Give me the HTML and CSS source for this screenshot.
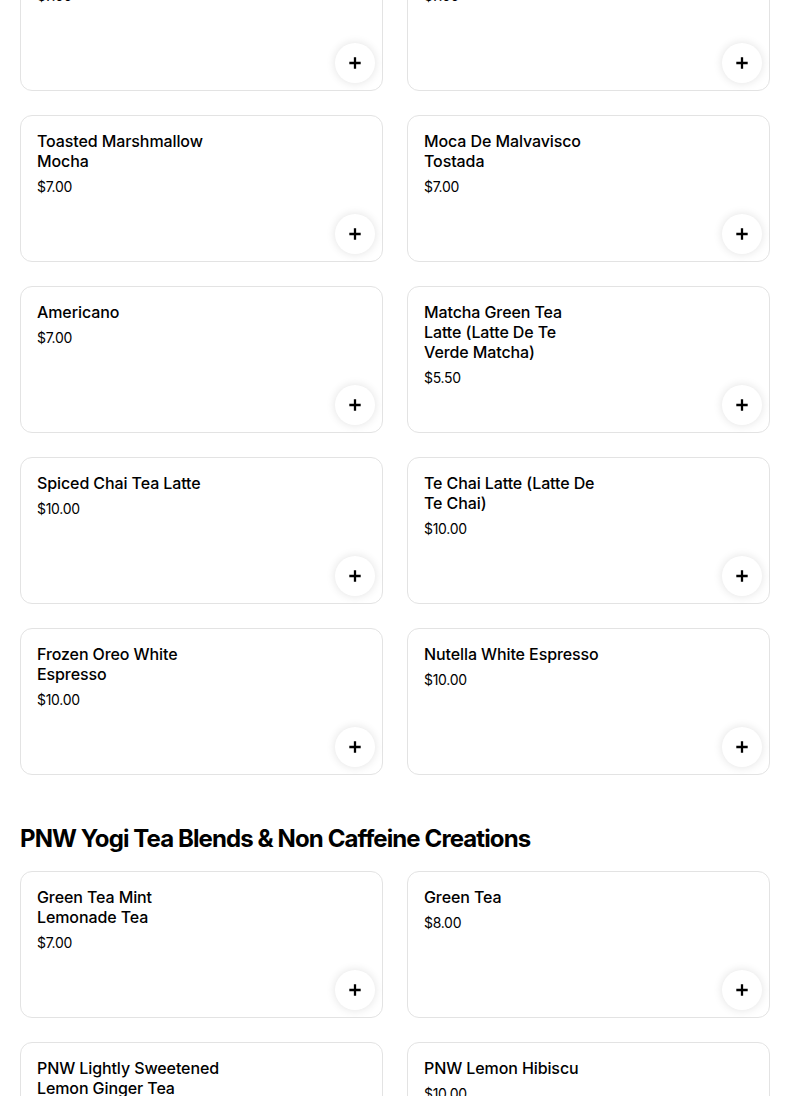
FILE: index.html
```html
<!DOCTYPE html>
<html lang="en">
<head>
<meta charset="utf-8">
<title>Menu</title>
<link rel="stylesheet" href="styles.css">
</head>
<body>
<main class="menu">
  <section class="section section-first">
    <div class="grid">
      <div class="card"><div class="card-title">Caramel Macchiato</div><div class="card-price">$7.00</div><button class="add" aria-label="Add"><svg viewBox="0 0 16 16" width="14" height="14"><path d="M8 1.5v13M1.5 8h13" stroke="#000" stroke-width="2.6" fill="none"/></svg></button></div>
      <div class="card"><div class="card-title">Macchiato De Caramelo</div><div class="card-price">$7.00</div><button class="add" aria-label="Add"><svg viewBox="0 0 16 16" width="14" height="14"><path d="M8 1.5v13M1.5 8h13" stroke="#000" stroke-width="2.6" fill="none"/></svg></button></div>
      <div class="card"><div class="card-title">Toasted Marshmallow Mocha</div><div class="card-price">$7.00</div><button class="add" aria-label="Add"><svg viewBox="0 0 16 16" width="14" height="14"><path d="M8 1.5v13M1.5 8h13" stroke="#000" stroke-width="2.6" fill="none"/></svg></button></div>
      <div class="card"><div class="card-title">Moca De Malvavisco Tostada</div><div class="card-price">$7.00</div><button class="add" aria-label="Add"><svg viewBox="0 0 16 16" width="14" height="14"><path d="M8 1.5v13M1.5 8h13" stroke="#000" stroke-width="2.6" fill="none"/></svg></button></div>
      <div class="card"><div class="card-title">Americano</div><div class="card-price">$7.00</div><button class="add" aria-label="Add"><svg viewBox="0 0 16 16" width="14" height="14"><path d="M8 1.5v13M1.5 8h13" stroke="#000" stroke-width="2.6" fill="none"/></svg></button></div>
      <div class="card"><div class="card-title">Matcha Green Tea<br>Latte (Latte De Te<br>Verde Matcha)</div><div class="card-price">$5.50</div><button class="add" aria-label="Add"><svg viewBox="0 0 16 16" width="14" height="14"><path d="M8 1.5v13M1.5 8h13" stroke="#000" stroke-width="2.6" fill="none"/></svg></button></div>
      <div class="card"><div class="card-title">Spiced Chai Tea Latte</div><div class="card-price">$10.00</div><button class="add" aria-label="Add"><svg viewBox="0 0 16 16" width="14" height="14"><path d="M8 1.5v13M1.5 8h13" stroke="#000" stroke-width="2.6" fill="none"/></svg></button></div>
      <div class="card"><div class="card-title">Te Chai Latte (Latte De Te Chai)</div><div class="card-price">$10.00</div><button class="add" aria-label="Add"><svg viewBox="0 0 16 16" width="14" height="14"><path d="M8 1.5v13M1.5 8h13" stroke="#000" stroke-width="2.6" fill="none"/></svg></button></div>
      <div class="card"><div class="card-title">Frozen Oreo White Espresso</div><div class="card-price">$10.00</div><button class="add" aria-label="Add"><svg viewBox="0 0 16 16" width="14" height="14"><path d="M8 1.5v13M1.5 8h13" stroke="#000" stroke-width="2.6" fill="none"/></svg></button></div>
      <div class="card"><div class="card-title">Nutella White Espresso</div><div class="card-price">$10.00</div><button class="add" aria-label="Add"><svg viewBox="0 0 16 16" width="14" height="14"><path d="M8 1.5v13M1.5 8h13" stroke="#000" stroke-width="2.6" fill="none"/></svg></button></div>
    </div>
  </section>
  <section class="section">
    <h2 class="section-title">PNW Yogi Tea Blends &amp; Non Caffeine Creations</h2>
    <div class="grid">
      <div class="card"><div class="card-title">Green Tea Mint Lemonade Tea</div><div class="card-price">$7.00</div><button class="add" aria-label="Add"><svg viewBox="0 0 16 16" width="14" height="14"><path d="M8 1.5v13M1.5 8h13" stroke="#000" stroke-width="2.6" fill="none"/></svg></button></div>
      <div class="card"><div class="card-title">Green Tea</div><div class="card-price">$8.00</div><button class="add" aria-label="Add"><svg viewBox="0 0 16 16" width="14" height="14"><path d="M8 1.5v13M1.5 8h13" stroke="#000" stroke-width="2.6" fill="none"/></svg></button></div>
      <div class="card"><div class="card-title">PNW Lightly Sweetened Lemon Ginger Tea</div><div class="card-price">$10.00</div><button class="add" aria-label="Add"><svg viewBox="0 0 16 16" width="14" height="14"><path d="M8 1.5v13M1.5 8h13" stroke="#000" stroke-width="2.6" fill="none"/></svg></button></div>
      <div class="card"><div class="card-title">PNW Lemon Hibiscu</div><div class="card-price">$10.00</div><button class="add" aria-label="Add"><svg viewBox="0 0 16 16" width="14" height="14"><path d="M8 1.5v13M1.5 8h13" stroke="#000" stroke-width="2.6" fill="none"/></svg></button></div>
    </div>
  </section>
</main>
</body>
</html>
```

FILE: styles.css
```css
* { box-sizing: border-box; }
html, body { margin: 0; padding: 0; background: #fff; }
body {
  font-family: Inter, "Noto Sans", "Liberation Sans", sans-serif;
  color: #000;
  overflow: hidden;
}
.menu {
  width: 750px;
  margin-left: 20px;
}
.section-first { margin-top: -56px; }
.section { margin-bottom: 24px; }
.section-title {
  margin: 46px 0 14px;
  font-size: 24px;
  line-height: 36px;
  font-weight: 700;
  letter-spacing: -0.9px;
}
.grid {
  display: grid;
  grid-template-columns: 1fr 1fr;
  gap: 24px;
}
.card {
  position: relative;
  height: 147px;
  border: 1px solid #e3e3e3;
  border-radius: 12px;
  padding: 15px 16px;
  background: #fff;
}
.card-title {
  max-width: 184px;
  font-size: 16px;
  line-height: 20px;
  font-weight: 500;
  letter-spacing: -0.1px;
}
.card-price {
  margin-top: 6px;
  font-size: 14px;
  line-height: 20px;
  font-weight: 400;
  letter-spacing: -0.3px;
}
.add {
  position: absolute;
  right: 7px;
  bottom: 7px;
  width: 40px;
  height: 40px;
  border: none;
  border-radius: 50%;
  background: #fff;
  box-shadow: 0 0 10px rgba(0,0,0,0.12);
  display: flex;
  align-items: center;
  justify-content: center;
  padding: 0;
}
.add svg { display: block; }
```
